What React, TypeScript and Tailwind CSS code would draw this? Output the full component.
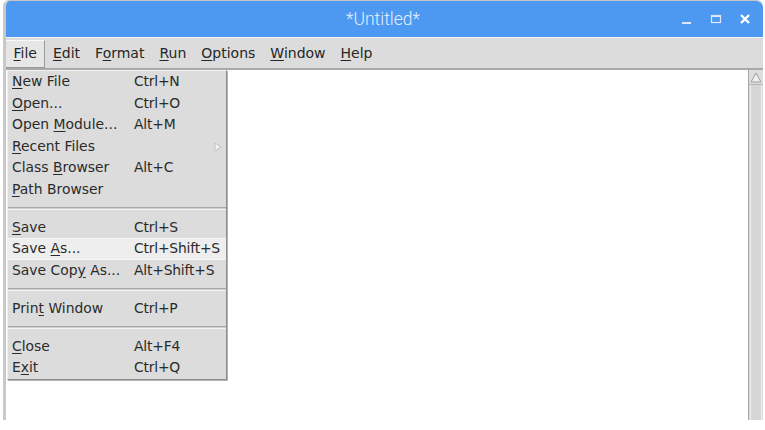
import React from "react";

type Item = { label: string; u: number; key?: string; sub?: boolean; active?: boolean } | "sep";

const menus: { label: string; u: number }[] = [
  { label: "File", u: 0 },
  { label: "Edit", u: 0 },
  { label: "Format", u: 1 },
  { label: "Run", u: 0 },
  { label: "Options", u: 0 },
  { label: "Window", u: 0 },
  { label: "Help", u: 0 },
];

const fileItems: Item[] = [
  { label: "New File", u: 0, key: "Ctrl+N" },
  { label: "Open...", u: 0, key: "Ctrl+O" },
  { label: "Open Module...", u: 5, key: "Alt+M" },
  { label: "Recent Files", u: 0, sub: true },
  { label: "Class Browser", u: 6, key: "Alt+C" },
  { label: "Path Browser", u: 0 },
  "sep",
  { label: "Save", u: 0, key: "Ctrl+S" },
  { label: "Save As...", u: 5, key: "Ctrl+Shift+S", active: true },
  { label: "Save Copy As...", u: 8, key: "Alt+Shift+S" },
  "sep",
  { label: "Print Window", u: 4, key: "Ctrl+P" },
  "sep",
  { label: "Close", u: 0, key: "Alt+F4" },
  { label: "Exit", u: 1, key: "Ctrl+Q" },
];

// label with the mnemonic letter underlined
const Mnemonic = ({ text, u }: { text: string; u: number }) => (
  <span>
    {text.slice(0, u)}
    <span className="underline underline-offset-2">{text[u]}</span>
    {text.slice(u + 1)}
  </span>
);

const FileMenu = () => (
  <div className="absolute left-[7px] top-[70px] w-[220px] bg-[#dcdcdc] border border-t-[#f2f2f2] border-l-[#f2f2f2] border-r-[#8c8c8c] border-b-[#8c8c8c] shadow-[1px_1px_0_#b5b5b5] text-[13.9px] text-[#2b2b2b]">
    {fileItems.map((it, i) =>
      it === "sep" ? (
        <div key={i} className="h-[16.5px] flex items-center">
          <div className="w-full h-[3px] border-t border-t-[#a8a8a8] border-b border-b-[#f4f4f4] bg-[#cfcfcf]" />
        </div>
      ) : (
        <div
          key={i}
          className={
            "h-[21.5px] flex items-center pl-[4px] relative " +
            (it.active ? "bg-[#eeeeee] border-y border-[#f7f7f7]" : "")
          }
        >
          <div className="w-[122px]">
            <Mnemonic text={it.label} u={it.u} />
          </div>
          {it.key && <div className="tracking-[-0.2px]">{it.key}</div>}
          {it.sub && (
            <svg className="absolute right-[4px] top-[6px]" width="8" height="10" viewBox="0 0 8 10">
              <path d="M1 1 L7 5 L1 9 Z" fill="#f4f4f4" stroke="#bdbdbd" strokeWidth="1" />
            </svg>
          )}
        </div>
      )
    )}
  </div>
);

export default function App() {
  return (
    <div className="w-[765px] h-[430px] bg-white relative overflow-hidden" style={{ fontFamily: '"DejaVu Sans", sans-serif' }}>
      <div className="ml-[3px] mr-[2px] mt-[1px] h-[419px] flex flex-col border-l-[3px] border-[#c9c9c9] rounded-t-[6px] overflow-hidden shadow-[0_-1px_0_#c4c4c4]">
        {/* title bar */}
        <div className="h-[36px] bg-[#4d98f0] flex items-center relative -ml-[3px] rounded-t-[6px]">
          <div className="absolute inset-x-0 text-center text-[17.5px] font-light text-[#e4efff] pt-[1px]" style={{ fontFamily: "Roboto, sans-serif" }}>
            *Untitled*
          </div>
          <div className="ml-auto flex items-center gap-[17px] pr-[12px] text-[#dfeeff]">
            <svg width="12" height="12" viewBox="0 0 12 12">
              <rect x="1" y="9" width="9" height="2" fill="#dbe9fb" />
            </svg>
            <svg width="12" height="12" viewBox="0 0 12 12">
              <rect x="1.5" y="2.5" width="9" height="7" fill="none" stroke="#dbe9fb" strokeWidth="1.2" />
              <rect x="1" y="2" width="10" height="2" fill="#dbe9fb" />
            </svg>
            <svg width="12" height="12" viewBox="0 0 12 12">
              <path d="M2 2 L10 10 M10 2 L2 10" stroke="#ffffff" strokeWidth="2.4" />
            </svg>
          </div>
        </div>
        {/* menu bar */}
        <div className="h-[33px] bg-[#dcdcdc] border-b-2 border-[#a9a9a9] flex items-center pl-[2px] text-[14px] text-[#262626] -ml-[3px] border-t border-t-[#f5f5f5] pt-[1px]">
          {menus.map((m, i) => (
            <div
              key={m.label}
              className={
                "h-[28px] flex items-center px-[7.5px] " +
                (i === 0 ? "bg-[#e6e6e6] border border-t-[#fafafa] border-l-[#fafafa] border-r-[#9a9a9a] border-b-[#9a9a9a]" : "")
              }
            >
              <Mnemonic text={m.label} u={m.u} />
            </div>
          ))}
        </div>
        {/* editor + scrollbar */}
        <div className="flex-1 flex">
          <div className="flex-1 bg-white" />
          <div className="w-[15px] bg-[#d9d9d9] border-l border-[#a6a6a6] flex flex-col">
            <div className="h-[15px] border-b border-[#b5b5b5] bg-[#dedede] flex items-center justify-center">
              <svg width="12" height="11" viewBox="0 0 12 11">
                <path d="M6 1 L11 10 L1 10 Z" fill="#efefef" stroke="#9e9e9e" strokeWidth="1" />
              </svg>
            </div>
            <div className="flex-1 mx-[1px] border-x border-[#eeeeee] bg-[#d6d6d6]" />
          </div>
        </div>
      </div>
      <FileMenu />
    </div>
  );
}
